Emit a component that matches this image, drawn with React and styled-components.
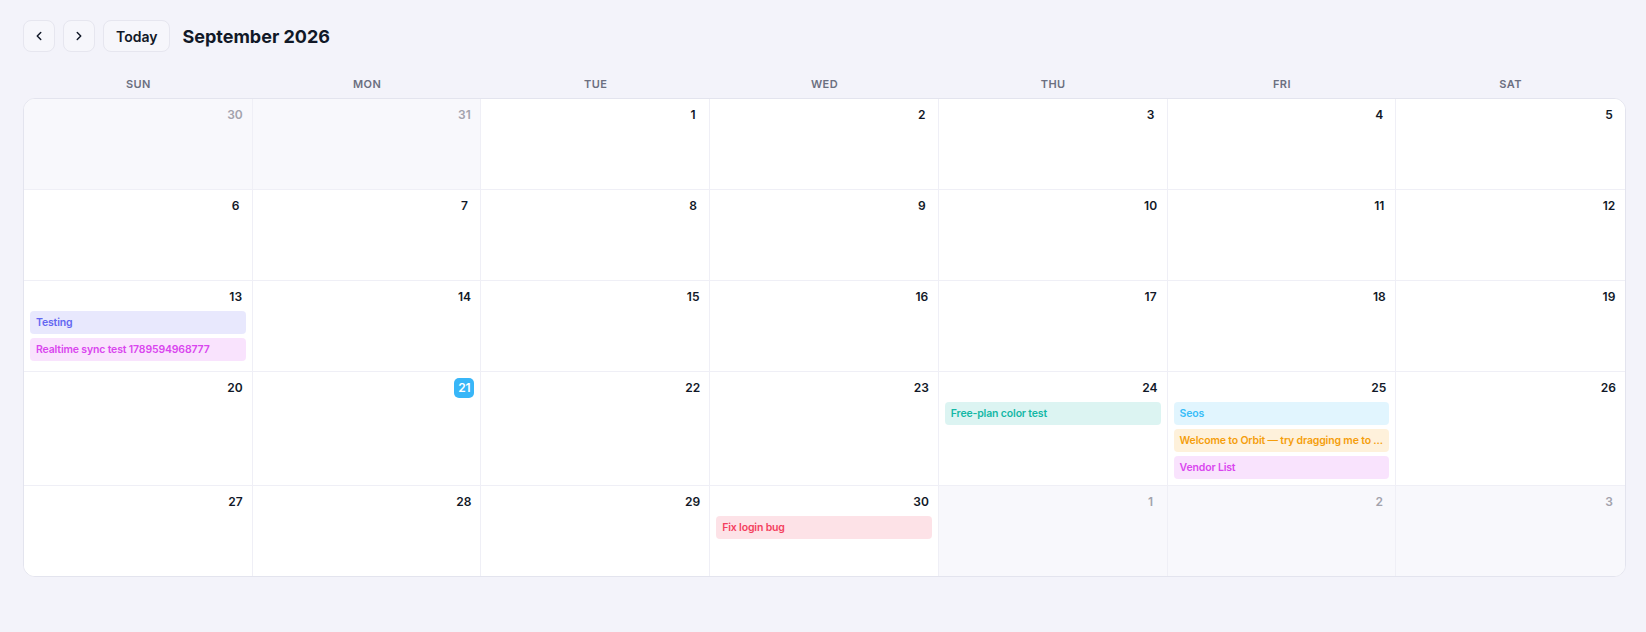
import React from "react";
import styled, { createGlobalStyle } from "styled-components";

const GlobalStyle = createGlobalStyle`
  html, body {
    margin: 0;
    padding: 0;
    background: #f3f3fa;
  }
  body {
    font-family: Inter, "Noto Sans", "Liberation Sans", sans-serif;
    color: #111827;
  }
`;

const Page = styled.div`
  padding: 20px 20px 40px 23px;
`;

/* ---------- toolbar ---------- */

const Toolbar = styled.div`
  display: flex;
  align-items: center;
  gap: 8px;
  height: 32px;
`;

const NavButton = styled.button`
  display: inline-flex;
  align-items: center;
  justify-content: center;
  height: 32px;
  min-width: 32px;
  padding: ${(p) => (p.$wide ? "0 12px" : "0")};
  border: 1px solid #e6e6ef;
  border-radius: 8px;
  background: #f6f6fb;
  color: #111827;
  font-family: inherit;
  font-size: 14px;
  font-weight: 600;
  cursor: pointer;
`;

const Title = styled.h1`
  margin: 0 0 0 4px;
  font-size: 18px;
  font-weight: 700;
  color: #111827;
`;

/* ---------- weekday header ---------- */

const WeekdayRow = styled.div`
  display: grid;
  grid-template-columns: repeat(7, 1fr);
  margin-top: 24px;
  padding: 0 1px 6px;
`;

const Weekday = styled.div`
  text-align: center;
  font-size: 11px;
  line-height: 16px;
  font-weight: 600;
  letter-spacing: 0.04em;
  color: #6b6f80;
`;

/* ---------- month grid ---------- */

const Month = styled.div`
  background: #ffffff;
  border: 1px solid #e3e4ee;
  border-radius: 12px;
  overflow: hidden;
`;

const Week = styled.div`
  display: grid;
  grid-template-columns: repeat(7, 1fr);
  border-bottom: 1px solid #efeff6;

  &:last-child {
    border-bottom: none;
  }
`;

const Cell = styled.div`
  display: flex;
  flex-direction: column;
  gap: 4px;
  min-width: 0;
  min-height: 90px;
  box-sizing: border-box;
  padding: 6px;
  background: ${(p) => (p.$outside ? "#f8f8fc" : "#ffffff")};
  border-right: 1px solid #efeff6;

  &:last-child {
    border-right: none;
  }
`;

const DayNumber = styled.span`
  align-self: flex-end;
  min-width: 20px;
  height: 20px;
  box-sizing: border-box;
  padding: 0 3px;
  border-radius: 5px;
  text-align: center;
  font-size: 12px;
  line-height: 20px;
  font-weight: 600;
  color: ${(p) => (p.$today ? "#ffffff" : p.$outside ? "#a3a3ad" : "#111827")};
  background: ${(p) => (p.$today ? "#38b6f8" : "transparent")};
`;

const Event = styled.div`
  height: 23px;
  box-sizing: border-box;
  padding: 0 6px;
  border-radius: 4px;
  font-size: 10.5px;
  line-height: 23px;
  font-weight: 600;
  letter-spacing: -0.015em;
  white-space: nowrap;
  overflow: hidden;
  text-overflow: ellipsis;
  color: ${(p) => p.$color};
  background: ${(p) => p.$color}26;
  cursor: pointer;
`;

/* ---------- data ---------- */

const COLORS = {
  indigo: "#6366f1",
  fuchsia: "#d946ef",
  teal: "#14b8a6",
  sky: "#38bdf8",
  amber: "#f59e0b",
  rose: "#f43f5e",
};

const EVENTS = {
  13: [
    { title: "Testing", color: COLORS.indigo },
    { title: "Realtime sync test 1789594968777", color: COLORS.fuchsia },
  ],
  24: [{ title: "Free-plan color test", color: COLORS.teal }],
  25: [
    { title: "Seos", color: COLORS.sky },
    {
      title: "Welcome to Orbit — try dragging me to another day",
      color: COLORS.amber,
    },
    { title: "Vendor List", color: COLORS.fuchsia },
  ],
  30: [{ title: "Fix login bug", color: COLORS.rose }],
};

const MAX_TITLE = 38;

const shorten = (title) =>
  title.length > MAX_TITLE ? title.slice(0, MAX_TITLE) + "..." : title;

const WEEKDAYS = ["SUN", "MON", "TUE", "WED", "THU", "FRI", "SAT"];

function buildWeeks() {
  const days = [
    { day: 30, outside: true },
    { day: 31, outside: true },
  ];
  for (let d = 1; d <= 30; d++) days.push({ day: d, outside: false });
  for (let d = 1; d <= 3; d++) days.push({ day: d, outside: true });
  const weeks = [];
  for (let i = 0; i < days.length; i += 7) weeks.push(days.slice(i, i + 7));
  return weeks;
}

const TODAY = 21;

const ChevronLeft = () => (
  <svg width="14" height="14" viewBox="0 0 24 24" fill="none" stroke="currentColor" strokeWidth="2.5" strokeLinecap="round" strokeLinejoin="round">
    <path d="M15 18l-6-6 6-6" />
  </svg>
);

const ChevronRight = () => (
  <svg width="14" height="14" viewBox="0 0 24 24" fill="none" stroke="currentColor" strokeWidth="2.5" strokeLinecap="round" strokeLinejoin="round">
    <path d="M9 18l6-6-6-6" />
  </svg>
);

export default function App() {
  const weeks = buildWeeks();

  return (
    <Page>
      <GlobalStyle />
      <Toolbar>
        <NavButton type="button" aria-label="Previous month">
          <ChevronLeft />
        </NavButton>
        <NavButton type="button" aria-label="Next month">
          <ChevronRight />
        </NavButton>
        <NavButton type="button" $wide>
          Today
        </NavButton>
        <Title>September 2026</Title>
      </Toolbar>

      <WeekdayRow>
        {WEEKDAYS.map((w) => (
          <Weekday key={w}>{w}</Weekday>
        ))}
      </WeekdayRow>

      <Month>
        {weeks.map((week, wi) => (
          <Week key={wi}>
            {week.map(({ day, outside }) => {
              const events = outside ? [] : EVENTS[day] || [];
              return (
                <Cell key={`${wi}-${day}`} $outside={outside}>
                  <DayNumber $outside={outside} $today={!outside && day === TODAY}>
                    {day}
                  </DayNumber>
                  {events.map((ev) => (
                    <Event key={ev.title} $color={ev.color} title={ev.title}>
                      {shorten(ev.title)}
                    </Event>
                  ))}
                </Cell>
              );
            })}
          </Week>
        ))}
      </Month>
    </Page>
  );
}
